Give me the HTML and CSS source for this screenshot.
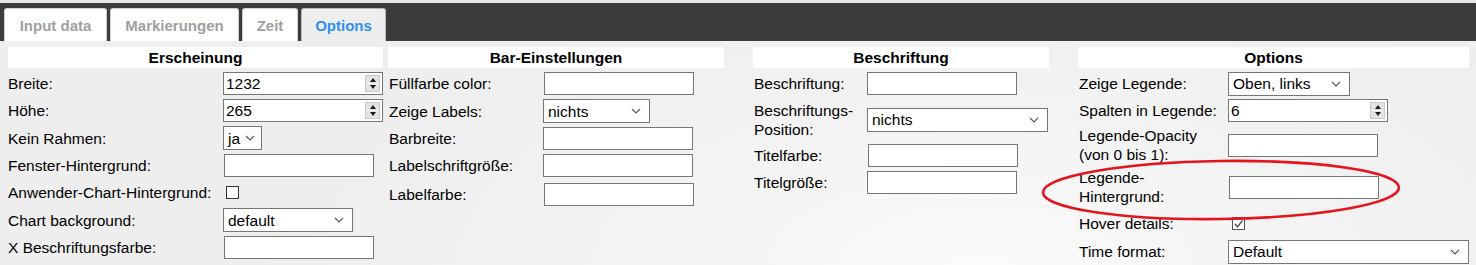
FILE: index.html
```html
<!DOCTYPE html>
<html lang="de">
<head>
<meta charset="utf-8">
<title>Options</title>
<link rel="stylesheet" href="styles.css">
</head>
<body>
<div class="topstrip"></div>
<nav class="tabbar">
  <span class="tab t1">Input data</span>
  <span class="tab t2">Markierungen</span>
  <span class="tab t3">Zeit</span>
  <span class="tab t4 active">Options</span>
</nav>
<main class="content">
  <section class="col col1">
    <h2 class="colhead">Erscheinung</h2>
    <div class="row"><span class="lbl">Breite:</span><span class="num w160"><input type="text" value="1232"><span class="spin"><i class="up"></i><i class="down"></i></span></span></div>
    <div class="row"><span class="lbl">Höhe:</span><span class="num w160"><input type="text" value="265"><span class="spin"><i class="up"></i><i class="down"></i></span></span></div>
    <div class="row"><span class="lbl">Kein Rahmen:</span><span class="sel w39"><span class="val">ja</span><svg class="chev" viewBox="0 0 10 6"><path d="M1 1 L5 5 L9 1"/></svg></span></div>
    <div class="row"><span class="lbl">Fenster-Hintergrund:</span><input class="txt sh" type="text"></div>
    <div class="row"><span class="lbl">Anwender-Chart-Hintergrund:</span><span class="cb"></span></div>
    <div class="row"><span class="lbl">Chart background:</span><span class="sel w130"><span class="val">default</span><svg class="chev" viewBox="0 0 10 6"><path d="M1 1 L5 5 L9 1"/></svg></span></div>
    <div class="row"><span class="lbl">X Beschriftungsfarbe:</span><input class="txt sh" type="text"></div>
  </section>
  <section class="col col2">
    <h2 class="colhead">Bar-Einstellungen</h2>
    <div class="row"><span class="lbl">Füllfarbe color:</span><input class="txt sh" type="text"></div>
    <div class="row"><span class="lbl">Zeige Labels:</span><span class="sel w107"><span class="val">nichts</span><svg class="chev" viewBox="0 0 10 6"><path d="M1 1 L5 5 L9 1"/></svg></span></div>
    <div class="row"><span class="lbl">Barbreite:</span><input class="txt" type="text"></div>
    <div class="row"><span class="lbl">Labelschriftgröße:</span><input class="txt" type="text"></div>
    <div class="row tall"><span class="lbl">Labelfarbe:</span><input class="txt sh" type="text"></div>
  </section>
  <section class="col col3">
    <h2 class="colhead">Beschriftung</h2>
    <div class="row"><span class="lbl">Beschriftung:</span><input class="txt" type="text"></div>
    <div class="row two"><span class="lbl">Beschriftungs-Position:</span><span class="sel w181"><span class="val">nichts</span><svg class="chev" viewBox="0 0 10 6"><path d="M1 1 L5 5 L9 1"/></svg></span></div>
    <div class="row"><span class="lbl">Titelfarbe:</span><input class="txt sh" type="text"></div>
    <div class="row"><span class="lbl">Titelgröße:</span><input class="txt" type="text"></div>
  </section>
  <section class="col col4">
    <h2 class="colhead">Options</h2>
    <div class="row"><span class="lbl">Zeige Legende:</span><span class="sel w122"><span class="val">Oben, links</span><svg class="chev" viewBox="0 0 10 6"><path d="M1 1 L5 5 L9 1"/></svg></span></div>
    <div class="row"><span class="lbl">Spalten in Legende:</span><span class="num w160"><input type="text" value="6"><span class="spin"><i class="up"></i><i class="down"></i></span></span></div>
    <div class="row two"><span class="lbl">Legende-Opacity (von 0 bis 1):</span><input class="txt" type="text"></div>
    <div class="row two"><span class="lbl">Legende-Hintergrund:</span><input class="txt sh" type="text"></div>
    <div class="row tall"><span class="lbl">Hover details:</span><span class="cb checked"><svg viewBox="0 0 12 12"><path d="M2 6.5 L5 9.5 L10.5 2.5"/></svg></span></div>
    <div class="row"><span class="lbl">Time format:</span><span class="sel w243"><span class="val">Default</span><svg class="chev" viewBox="0 0 10 6"><path d="M1 1 L5 5 L9 1"/></svg></span></div>
  </section>
</main>
<svg class="mark" viewBox="0 0 364 66" width="364" height="66"><ellipse cx="182" cy="33" rx="178" ry="29" transform="rotate(-0.8 182 33)"/></svg>
</body>
</html>
```
FILE: styles.css
```css
* { box-sizing: border-box; }
html, body { margin: 0; padding: 0; }
body {
  width: 1476px;
  height: 265px;
  overflow: hidden;
  position: relative;
  font-family: "Liberation Sans", Arial, sans-serif;
  font-size: 15.5px;
  color: #000;
  background: #eeeeee;
}
.topstrip { height: 3px; background: #e6e6e6; }
.tabbar {
  height: 38px;
  background: #3c3c3c;
  display: flex;
  align-items: flex-end;
  gap: 3px;
  padding-left: 4px;
}
.tab {
  height: 33px;
  display: flex;
  align-items: center;
  justify-content: center;
  background: #fff;
  border: 1px solid #cfcfcf;
  border-bottom: none;
  border-radius: 3px 3px 0 0;
  font-weight: bold;
  font-size: 15px;
  color: #a0a0a0;
}
.t1 { width: 103px; }
.t2 { width: 129px; }
.t3 { width: 56px; }
.t4 { width: 85px; }
.tab.active { background: #eeeeee; color: #2e8ff0; border-color: #b8b8b8; }

.content {
  height: 224px;
  display: flex;
  padding: 6px 0 0 8px;
  background: radial-gradient(ellipse 720px 330px at 980px 230px, #fbfbfb 0%, #f3f3f3 45%, #eeeeee 100%);
}
.col { display: flex; flex-direction: column; }
.col1 { width: 375px; --lw: 215px; }
.col2 { width: 336px; margin-left: 5px; --lw: 155px; }
.col3 { width: 296px; margin-left: 29px; --lw: 114px; }
.col4 { width: 391px; margin-left: 29px; --lw: 150px; }
.colhead {
  margin: 0 0 2px;
  height: 21px;
  line-height: 22px;
  background: #fff;
  text-align: center;
  font-size: 15.5px;
  font-weight: bold;
}
.row {
  display: flex;
  align-items: center;
  min-height: 27px;
  padding: 2px 0;
  line-height: 19px;
}
.row.tall { min-height: 30px; }
.col2 .row, .col3 .row, .col4 .row { padding-left: 1px; }
.row.two { min-height: 42px; }
.col3 .row.two { min-height: 45px; }
.lbl {
  width: var(--lw);
  flex: none;
  padding-right: 4px;
}
.col2 .lbl, .col3 .lbl, .col4 .lbl { width: calc(var(--lw) - 1px); }

input { font: inherit; color: #000; }
.txt {
  width: 150px;
  height: 23px;
  border: 1px solid #767676;
  background: #fff;
  padding: 0 2px;
  margin: 0;
}
.sh { margin-left: 1px; }
.num {
  display: flex;
  align-items: center;
  height: 23px;
  border: 1px solid #767676;
  background: #fff;
  padding-right: 2px;
}
.num input {
  flex: 1;
  min-width: 0;
  border: none;
  outline: none;
  padding: 0 2px;
  height: 21px;
  background: transparent;
}
.w160 { width: 160px; }
.spin {
  width: 15px;
  height: 17px;
  background: #e3e3e3;
  border: 1px solid #c9c9c9;
  display: flex;
  flex-direction: column;
  align-items: center;
  justify-content: space-evenly;
  position: relative;
}
.spin::after {
  content: "";
  position: absolute;
  left: 1px; right: 1px; top: 7px;
  height: 1px;
  background: #fff;
}
.spin i { width: 0; height: 0; border-left: 3.5px solid transparent; border-right: 3.5px solid transparent; }
.spin .up { border-bottom: 4px solid #1a1a1a; }
.spin .down { border-top: 4px solid #1a1a1a; }

.sel {
  display: flex;
  align-items: center;
  justify-content: space-between;
  height: 24px;
  border: 1px solid #767676;
  background: #fff;
  padding: 0 8px 0 4px;
}
.sel .val { white-space: nowrap; }
.chev { width: 10px; height: 6px; flex: none; }
.chev path { fill: none; stroke: #555; stroke-width: 1.1; }
.w39 { width: 39px; padding-right: 6px; }
.w107 { width: 107px; }
.w130 { width: 130px; }
.w181 { width: 181px; }
.w122 { width: 122px; }
.w243 { width: 243px; }

.cb {
  width: 13px;
  height: 13px;
  margin-left: 3px;
  border: 1px solid #333;
  background: #fff;
  display: flex;
  align-items: center;
  justify-content: center;
}
.cb.checked { border-color: #555; margin-left: 4px; }
.cb svg { width: 11px; height: 11px; }
.cb path { fill: none; stroke: #444; stroke-width: 1.4; }

.mark {
  position: absolute;
  left: 1039px;
  top: 157px;
  pointer-events: none;
}
.mark ellipse { fill: none; stroke: #e3141d; stroke-width: 2.6; }
```
